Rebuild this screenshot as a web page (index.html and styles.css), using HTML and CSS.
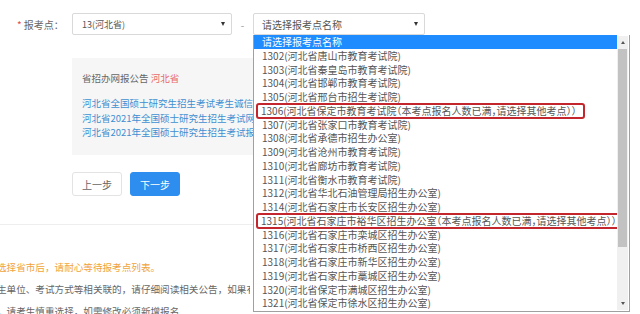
FILE: index.html
```html
<!DOCTYPE html>
<html lang="zh-CN">
<head>
    <meta charset="UTF-8">
    <meta name="viewport" content="width=device-width, initial-scale=1.0">
    <title>报考点选择</title>
    <link rel="stylesheet" href="styles.css">
</head>
<body>

<div class="page">
    <div class="form-row">
        <label class="field-label"><span class="req">*</span>报考点：</label>
        <div class="select province">
            <span>13(河北省)</span>
            <i class="caret"></i>
        </div>
        <span class="dash">-</span>
        <div class="select-wrap">
            <div class="select site">
                <span class="placeholder">请选择报考点名称</span>
                <i class="caret"></i>
            </div>

            <!-- opened option list -->
            <div class="dropdown">
                <ul class="options">
                    <li class="selected">请选择报考点名称</li>
                    <li>1302(河北省唐山市教育考试院)</li>
                    <li>1303(河北省秦皇岛市教育考试院)</li>
                    <li>1304(河北省邯郸市教育考试院)</li>
                    <li>1305(河北省邢台市招生考试院)</li>
                    <li><span class="full">1306(河北省保定市教育考试院（本考点报名人数已满，请选择其他考点））</span></li>
                    <li>1307(河北省张家口市教育考试院)</li>
                    <li>1308(河北省承德市招生办公室)</li>
                    <li>1309(河北省沧州市教育考试院)</li>
                    <li>1310(河北省廊坊市教育考试院)</li>
                    <li>1311(河北省衡水市教育考试院)</li>
                    <li>1312(河北省华北石油管理局招生办公室)</li>
                    <li>1314(河北省石家庄市长安区招生办公室)</li>
                    <li><span class="full">1315(河北省石家庄市裕华区招生办公室（本考点报名人数已满，请选择其他考点））</span></li>
                    <li>1316(河北省石家庄市栾城区招生办公室)</li>
                    <li>1317(河北省石家庄市桥西区招生办公室)</li>
                    <li>1318(河北省石家庄市新华区招生办公室)</li>
                    <li>1319(河北省石家庄市藁城区招生办公室)</li>
                    <li>1320(河北省保定市满城区招生办公室)</li>
                    <li>1321(河北省保定市徐水区招生办公室)</li>
                </ul>
                <div class="scrollbar">
                    <span class="arrow up"></span>
                    <span class="thumb"></span>
                    <span class="arrow down"></span>
                </div>
            </div>
        </div>
    </div>

    <div class="notice">
        <p class="notice-title">省招办网报公告 <span class="province-name">河北省</span></p>
        <a href="#" class="notice-link">河北省全国硕士研究生招生考试考生诚信考试承诺书</a>
        <a href="#" class="notice-link">河北省2021年全国硕士研究生招生考试网上报名公告</a>
        <a href="#" class="notice-link">河北省2021年全国硕士研究生招生考试报考点设置</a>
    </div>

    <div class="actions">
        <button class="btn btn-prev">上一步</button>
        <button class="btn btn-next">下一步</button>
    </div>

    <div class="divider"></div>

    <div class="tips">
        <p class="tip-warn">选择省市后，请耐心等待报考点列表。</p>
        <p>生单位、考试方式等相关联的，请仔细阅读相关公告，如果有</p>
        <p>，请考生慎重选择，如需修改必须新增报名</p>
    </div>
</div>

</body>
</html>
```

FILE: styles.css
```css
body {
    margin: 0;
    padding: 0;
    background: #fff;
    font-family: "Noto Sans CJK SC", "Liberation Sans", sans-serif;
    color: #555;
    overflow: hidden;
}

.page {
    width: 640px;
    height: 314px;
    overflow: hidden;
}

.form-row {
    display: flex;
    align-items: center;
    padding: 13px 0 0 17px;
}

.field-label {
    width: 55px;
    font-size: 10px;
    color: #666;
}

.req {
    color: #e24b4b;
    margin-right: 2px;
}

.select {
    box-sizing: border-box;
    height: 22px;
    display: flex;
    align-items: center;
    justify-content: space-between;
    padding: 0 6px 0 9px;
    border: 1px solid #d9d9d9;
    border-radius: 2px;
    background: #fff;
    font-size: 9px;
    color: #555;
}

.province {
    width: 160px;
}

.site {
    width: 172px;
    padding-left: 8px;
    font-size: 10px;
}

.caret {
    width: 0;
    height: 0;
    border-left: 2.5px solid transparent;
    border-right: 2.5px solid transparent;
    border-top: 4px solid #333;
}

.dash {
    width: 21px;
    text-align: center;
    font-size: 10px;
    color: #999;
}

.select-wrap {
    position: relative;
}

.dropdown {
    position: absolute;
    top: 22px;
    left: 0;
    width: 377px;
    height: 277px;
    box-sizing: border-box;
    display: flex;
    background: #fff;
    border: 1px solid #a0a0a0;
    border-top: none;
    z-index: 10;
}

.options {
    flex: 1;
    min-width: 0;
    list-style: none;
    margin: 0;
    padding: 0;
}

.options li {
    height: 13.75px;
    line-height: 13.75px;
    padding-left: 8px;
    font-size: 10px;
    color: #555;
    white-space: nowrap;
    font-feature-settings: "halt";
}

.options li.selected {
    background: #1e8cff;
    color: #fff;
}

.full {
    display: inline-block;
    margin-left: -5px;
    padding: 0 7px 0 4px;
    outline: 2px solid #c3262c;
    outline-offset: -1px;
    border-radius: 2px;
}

.scrollbar {
    flex: none;
    width: 11px;
    margin: 1px 1px 1px 0;
    display: flex;
    flex-direction: column;
    align-items: center;
    background: #f0f0f0;
}

.arrow {
    width: 0;
    height: 0;
    margin: 5px 0;
    border-left: 2.5px solid transparent;
    border-right: 2.5px solid transparent;
}

.arrow.up {
    border-bottom: 3px solid #555;
}

.arrow.down {
    margin-top: auto;
    border-top: 3px solid #555;
}

.thumb {
    width: 9px;
    height: 198px;
    background: #c2c2c2;
}

.notice {
    width: 181px;
    height: 97px;
    box-sizing: border-box;
    margin: 23px 0 0 72px;
    padding: 13px 0 0 10px;
    background: #f6f6f6;
    overflow: hidden;
}

.notice-title {
    margin: 0 0 11px;
    line-height: 14px;
    font-size: 9.5px;
    color: #666;
}

.province-name {
    color: #e86a6a;
}

.notice-link {
    display: block;
    overflow: hidden;
    line-height: 14.5px;
    font-size: 9.5px;
    color: #3f8fd2;
    text-decoration: none;
    white-space: nowrap;
}

.actions {
    display: flex;
    gap: 8px;
    margin: 17px 0 0 72px;
}

.btn {
    width: 50px;
    height: 24px;
    border-radius: 3px;
    font-family: inherit;
    font-size: 10px;
    cursor: pointer;
}

.btn-prev {
    background: #fff;
    border: 1px solid #e3e3e3;
    color: #666;
}

.btn-next {
    background: #2d8ef0;
    border: 1px solid #2d8ef0;
    color: #fff;
}

.divider {
    width: 253px;
    margin-top: 28px;
    border-top: 1px solid #eee;
}

.tips {
    width: 253px;
    margin: 31px 0 0 -3px;
    font-size: 9.6px;
    color: #666;
    overflow: hidden;
}

.tips p {
    margin: 0;
    line-height: 22px;
    white-space: nowrap;
}

.tip-warn {
    color: #f0a43a;
}
```
